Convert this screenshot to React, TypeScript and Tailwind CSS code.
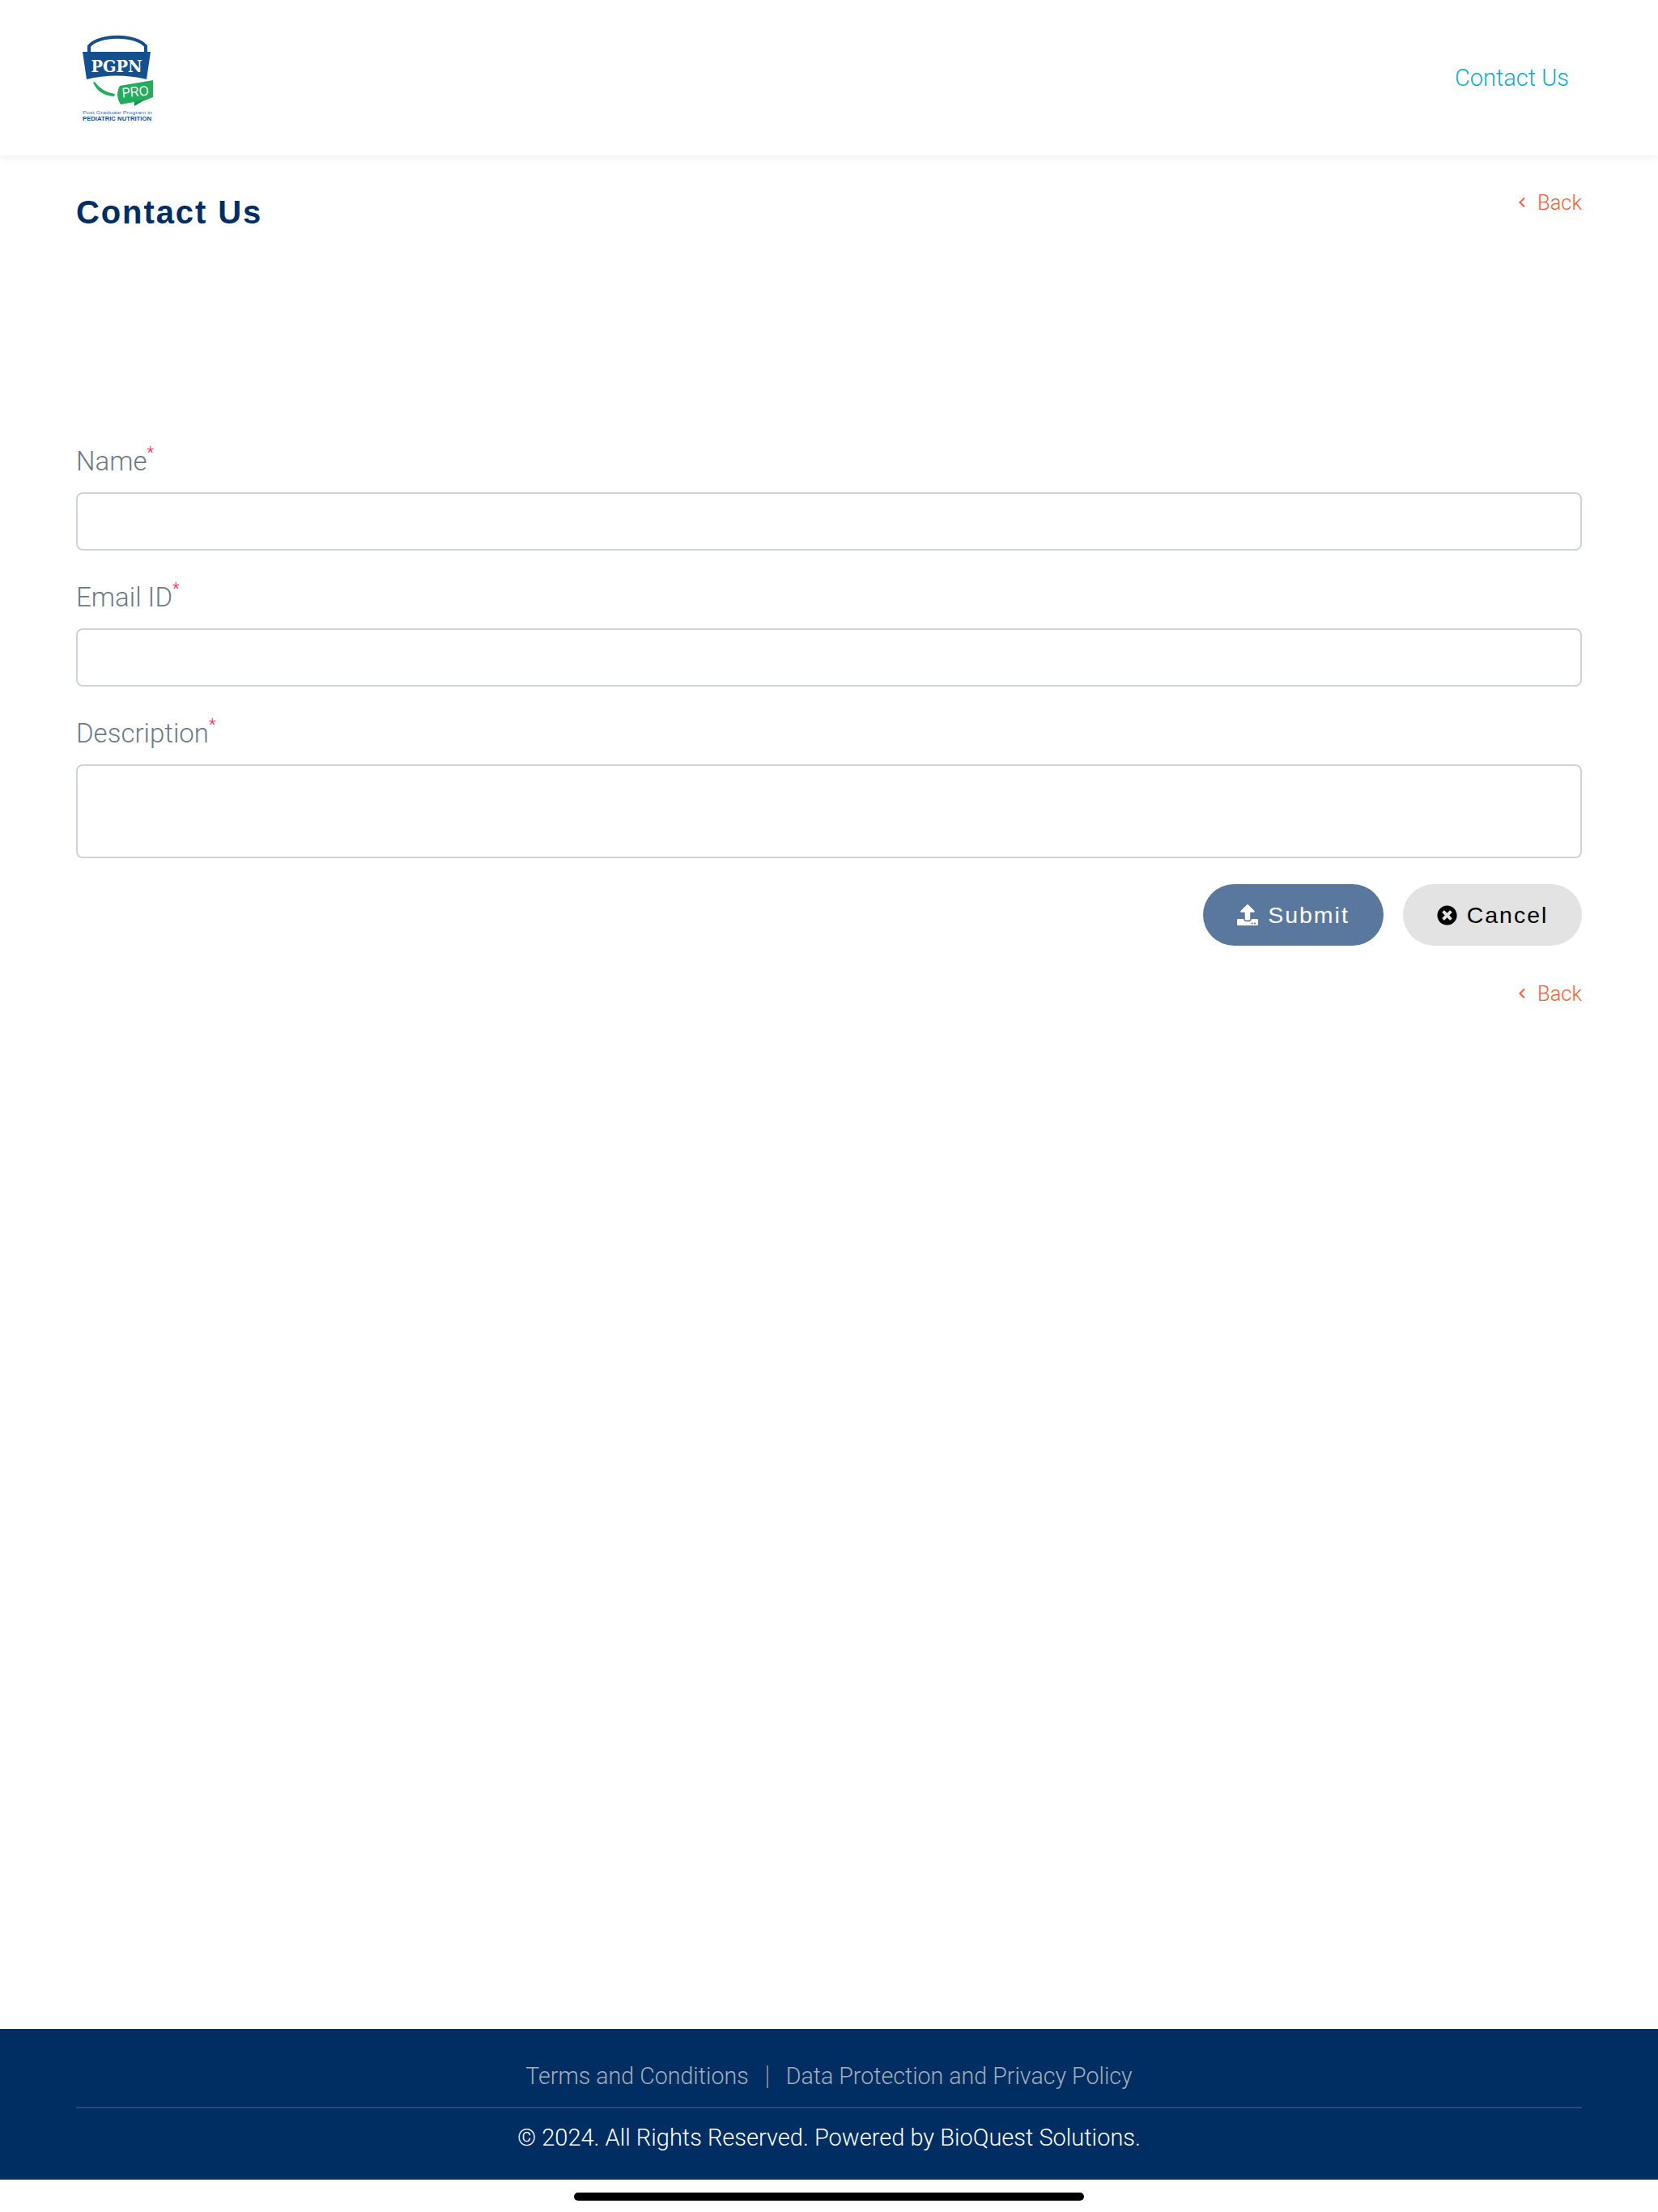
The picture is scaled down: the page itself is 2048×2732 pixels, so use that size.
import { FaTimesCircle, FaUpload } from "react-icons/fa";

const light = "font-['Roboto','Liberation_Sans',sans-serif] font-light";

function Logo() {
  return (
    <svg width="160" height="150" viewBox="0 0 160 150" className="block shrink-0">
      <path d="M50 45 V36 C62 21 108 21 120 36 V45" fill="none" stroke="#14508f" strokeWidth="4" />
      <path d="M42 43 H126 L121 77 C98 71 70 71 47 77 Z" fill="#14508f" />
      <text x="84" y="68" textAnchor="middle" fontFamily="'DejaVu Serif',serif" fontWeight="700" fontSize="21" textLength="63" lengthAdjust="spacingAndGlyphs" fill="#fff">PGPN</text>
      <path d="M57 80 C63 88 70 93 82 95 L81 98 C68 97 60 92 55 81 Z" fill="#22ad5c" />
      <path d="M88 85 L129 78 L129 99 L116 103 L106 110 V105 L89 108 C84 100 84 92 88 85 Z" fill="#22ad5c" />
      <path d="M106 110 L106 105 L129 99 L116 104 Z" fill="#17904a" />
      <text x="107" y="98" textAnchor="middle" fontFamily="'Liberation Sans',sans-serif" fontWeight="400" fontSize="17" textLength="33" lengthAdjust="spacingAndGlyphs" fill="#fff" transform="rotate(-5 107 91)">PRO</text>
      <text x="42" y="120" fontFamily="'Liberation Sans',sans-serif" fontSize="6.2" textLength="86" lengthAdjust="spacingAndGlyphs" fill="#3d78b5">Post Graduate Program in</text>
      <text x="42" y="128" fontFamily="'Liberation Sans',sans-serif" fontWeight="700" fontSize="6.4" textLength="85" lengthAdjust="spacingAndGlyphs" fill="#14508f">PEDIATRIC NUTRITION</text>
    </svg>
  );
}

function BackLink() {
  return (
    <a className={`flex items-center gap-[14px] text-[25.5px] leading-[28px] text-[#ff5c35] ${light}`}>
      <svg width="10" height="14" viewBox="0 0 10 14" fill="none" stroke="#ff5c35" strokeWidth="2">
        <path d="M8 1.5 L2.5 7 L8 12.5" />
      </svg>
      Back
    </a>
  );
}

function Field({ label, tall }: { label: string; tall?: boolean }) {
  return (
    <div className="flex flex-col">
      <label className={`h-[42px] text-[33px] leading-[42px] text-[#6c7a84] ${light}`}>
        {label}
        <sup className="relative -top-[15px] align-baseline text-[20px] leading-none text-[#e8264a]">*</sup>
      </label>
      <div className={`mt-[17px] rounded-[8px] border-2 border-[#cfd4da] bg-white ${tall ? "h-[116px]" : "h-[72px]"}`} />
    </div>
  );
}

export default function App() {
  return (
    <div className="flex min-h-[2732px] flex-col bg-white font-['Liberation_Sans',sans-serif]">
      <header className="flex h-[192px] items-center justify-between bg-white pl-[60px] pr-[110px] shadow-[0_2px_12px_rgba(0,0,0,0.07)]">
        <Logo />
        <a className={`mt-[2px] text-[29px] text-[#12a9cf] ${light}`}>Contact Us</a>
      </header>

      <main className="flex flex-col px-[94px]">
        <div className="flex items-start justify-between pt-[45px]">
          <h1 className="text-[40px] font-bold leading-[50px] tracking-[1.9px] text-[#002e62]">Contact Us</h1>
          <div className="-mt-[1px]">
            <BackLink />
          </div>
        </div>

        <form className="mt-[262px] flex flex-col gap-[37px]">
          <Field label="Name" />
          <Field label="Email ID" />
          <Field label="Description" tall />
        </form>

        <div className="mt-[32px] flex justify-end gap-[24px]">
          <button className="flex h-[76px] w-[223px] items-center justify-center gap-[12px] rounded-full bg-[#5a789d] text-[28.5px] tracking-[2px] text-white">
            <FaUpload className="h-[26px] w-[26px]" />
            Submit
          </button>
          <button className="flex h-[76px] w-[221px] items-center justify-center gap-[12px] rounded-full bg-[#e3e3e3] text-[28.5px] tracking-[2px] text-black">
            <FaTimesCircle className="h-[25px] w-[25px]" />
            Cancel
          </button>
        </div>

        <div className="mt-[45px] flex justify-end">
          <BackLink />
        </div>
      </main>

      <footer className="mt-auto bg-[#002e62] px-[94px] text-center">
        <div className={`flex h-[98px] items-center justify-center gap-[22px] border-b-2 border-[#24497a] pt-[21px] text-[28.6px] text-[#a3adb9] ${light}`}>
          <a>Terms and Conditions</a>
          <span className="h-[28px] w-[2px] bg-[#6e7f96]" />
          <a>Data Protection and Privacy Policy</a>
        </div>
        <p className={`flex h-[88px] items-center justify-center pb-[14px] text-[29px] text-white ${light}`}>
          © 2024. All Rights Reserved. Powered by BioQuest Solutions.
        </p>
      </footer>

      <div className="flex h-[40px] items-center justify-center bg-white pt-[1px]">
        <div className="h-[10px] w-[630px] rounded-full bg-black" />
      </div>
    </div>
  );
}
